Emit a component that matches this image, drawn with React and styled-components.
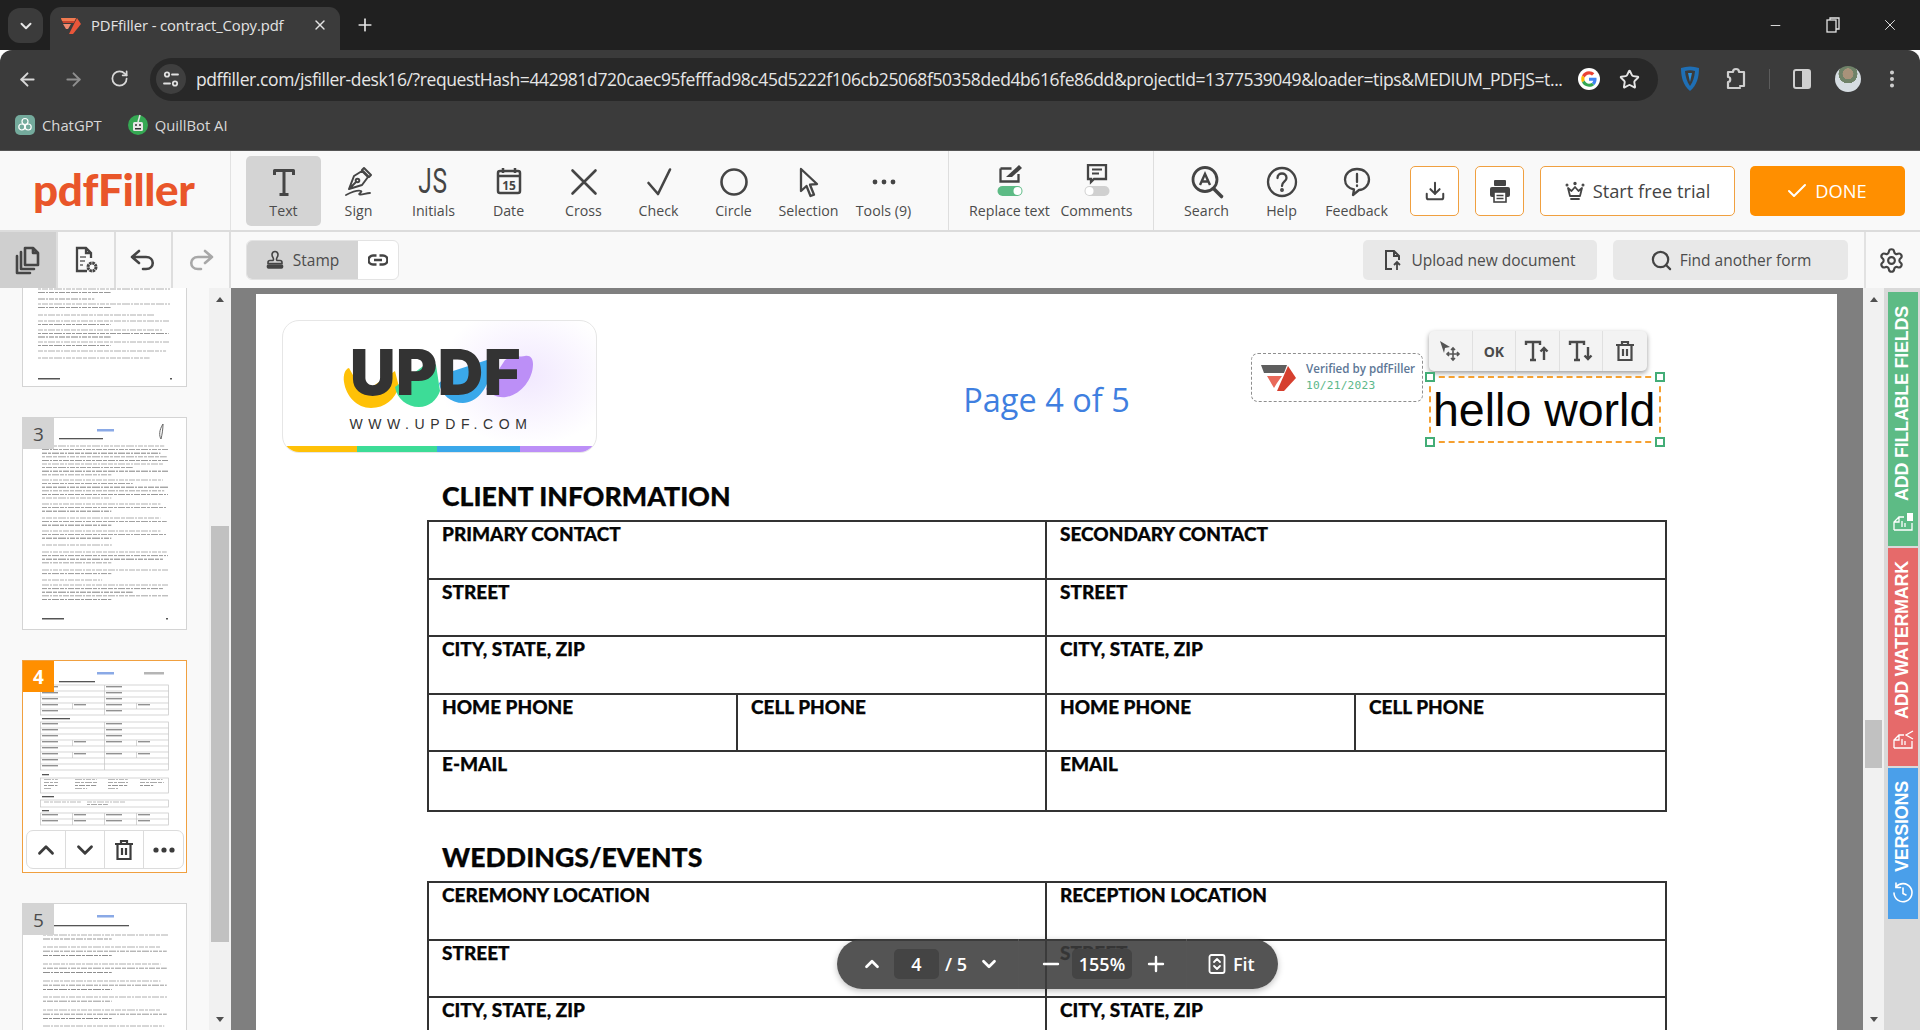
import React from 'react';
import styled, { createGlobalStyle } from 'styled-components';
import { ArrowLeft, ArrowRight, RotateCw, Star, Plus, X, ChevronDown, ChevronUp, Settings, Search, Minus, Check, Download, EllipsisVertical } from 'lucide-react';

const Global = createGlobalStyle`
  html, body { margin: 0; padding: 0; height: 100%; overflow: hidden; background: #fff; }
  #root { height: 100%; }
  * { box-sizing: border-box; }
`;

const Screen = styled.div`
  width: 1920px; height: 1030px; display: flex; flex-direction: column; overflow: hidden;
  font-family: "Open Sans", "Noto Sans", sans-serif; color: #4a4a4a;
`;

/* ---------- browser chrome ---------- */
const TabStrip = styled.div`
  height: 50px; background: #202020; display: flex; align-items: flex-end; padding-left: 8px; position: relative; flex: none;
`;
const TabMenu = styled.div`
  width: 35px; height: 35px; background: #3b3b3b; border-radius: 12px; margin-bottom: 7px; display: flex; align-items: center; justify-content: center; color: #e8e8e8;
`;
const Tab = styled.div`
  width: 290px; height: 43px; margin-left: 7px; background: #3b3b3b; border-radius: 11px 11px 0 0; display: flex; align-items: center; padding: 0 12px 7px 10px; color: #e3e3e3; font-size: 14.8px; gap: 9px;
`;
const TabTitle = styled.span` flex: 1; white-space: nowrap; letter-spacing: -0.1px; `;
const NewTab = styled.div` margin: 0 0 7px 10px; width: 30px; height: 36px; display: flex; align-items: center; justify-content: center; color: #e3e3e3; `;
const WinControls = styled.div` margin-left: auto; align-self: flex-start; height: 50px; display: flex; align-items: center; color: #e3e3e3; padding-right: 2px; `;
const WinBtn = styled.div` width: 57px; display: flex; align-items: center; justify-content: center; `;

const UrlBar = styled.div`
  height: 58px; background: #3b3b3b; flex: none; display: flex; align-items: center; color: #c8c8c8; border-radius: 12px 12px 0 0;
`;
const NavBtn = styled.div` width: 46px; display: flex; justify-content: center; color: ${p => p.$dim ? '#8f8f8f' : '#d8d8d8'}; `;
const NavGroup = styled.div` display: flex; padding-left: 4px; width: 150px; `;
const Omnibox = styled.div`
  width: 1508px; height: 43px; border-radius: 22px; background: #282828; display: flex; align-items: center; padding-left: 6px; color: #e6e6e6; flex: none;
`;
const SiteInfo = styled.div` width: 30px; height: 30px; border-radius: 50%; background: #3f3f3f; display: flex; align-items: center; justify-content: center; flex: none; `;
const UrlText = styled.div` margin-left: 10px; width: 1369px; font-size: 17.5px; white-space: nowrap; overflow: hidden; letter-spacing: -0.4px; flex: none; `;
const OmniIcon = styled.div` display: flex; justify-content: center; flex: none; width: ${p => p.$w}px; `;
const ExtIcons = styled.div` display: flex; align-items: center; flex: 1; color: #cfcfcf; `;
const ExtSlot = styled.div` width: ${p => p.$w}px; display: flex; justify-content: center; flex: none; `;
const ExtSep = styled.div` width: 1px; height: 20px; background: #5c5c5c; margin: 0 14px 0 19px; flex: none; `;
const Avatar = styled.div` width: 26px; height: 26px; border-radius: 50%; background: radial-gradient(circle at 50% 30%, #a8927a 0 24%, #6f8268 25% 42%, #d6dde2 43%); `;

const Bookmarks = styled.div`
  height: 43px; flex: none; background: #3b3b3b; display: flex; align-items: center; padding: 0 0 9px 15px; color: #d8d8d8; font-size: 14.8px; border-bottom: 1px solid #555;
`;
const Bookmark = styled.div` display: flex; align-items: center; gap: 7px; margin-right: 26px; `;

/* ---------- editor toolbar ---------- */
const MainBar = styled.div`
  height: 81px; flex: none; background: #f9f9f9; border-bottom: 2px solid #dcdcdc; display: flex; align-items: stretch;
`;
const LogoCell = styled.div` width: 231px; flex: none; border-right: 1px solid #e2e2e2; display: flex; align-items: center; padding: 0 0 3px 33px; `;
const Brand = styled.div` font-family: "Lato", sans-serif; font-weight: 900; font-size: 44px; color: #e9562a; letter-spacing: -0.4px; line-height: 1; `;
const ToolGroup = styled.div`
  display: flex; align-items: center; flex: none; padding: ${p => p.$pad}; border-right: ${p => p.$line ? '1px solid #dedede' : 'none'};
`;
const ToolItem = styled.div`
  width: ${p => p.$w || 75}px; height: 70px; border-radius: 5px; flex: none; display: flex; flex-direction: column; align-items: center; padding-top: 7px;
  background: ${p => p.$active ? '#d4d4d4' : 'transparent'};
`;
const ToolIcon = styled.div` height: 38px; display: flex; align-items: center; justify-content: center; color: #454545; `;
const ToolLabel = styled.div` font-size: 14.2px; line-height: 20px; color: #4c4c4c; white-space: nowrap; `;
const ActionRow = styled.div` display: flex; align-items: center; gap: 16px; margin-left: 16px; `;
const OutlineBtn = styled.div`
  height: 50px; width: ${p => p.$w}px; border: 1px solid #f0a040; border-radius: 5px; background: #fff; display: flex; align-items: center; justify-content: center; gap: 8px; color: #444; font-size: 18.3px; flex: none;
`;
const DoneBtn = styled.div`
  height: 50px; width: 155px; margin-left: -1px; background: #ff8f00; border-radius: 5px; padding-right: 3px; display: flex; align-items: center; justify-content: center; gap: 6px; color: #fff; font-size: 18.3px; flex: none;
`;

const SubBar = styled.div` height: 56px; flex: none; background: #f9f9f9; display: flex; align-items: center; border-bottom: 0; `;
const HistoryRow = styled.div` display: flex; width: 231px; height: 56px; flex: none; `;
const HistoryBtn = styled.div`
  width: 57.75px; height: 100%; display: flex; align-items: center; justify-content: center; border-right: 2px solid #dedede;
  background: ${p => p.$active ? '#cfcfcf' : '#f9f9f9'}; color: ${p => p.$dim ? '#a8a8a8' : '#454545'};
`;
const StampGroup = styled.div` display: flex; margin-left: 15px; height: 40px; width: 153px; border: 1px solid #e3e3e3; border-radius: 6px; overflow: hidden; background: #fff; `;
const StampMain = styled.div` width: 111px; background: #d4d4d4; display: flex; align-items: center; justify-content: center; gap: 9px; font-size: 15.5px; color: #4c4c4c; `;
const StampLink = styled.div` flex: 1; display: flex; align-items: center; justify-content: center; color: #444; `;
const SubSpacer = styled.div` flex: 1; `;
const GreyBtn = styled.div`
  width: ${p => p.$w}px; height: 40px; margin-right: 16px; background: #e8e8e8; border-radius: 5px; display: flex; align-items: center; justify-content: center; gap: ${p => p.$gap || 9}px; font-size: 15.5px; color: #4c4c4c; flex: none;
`;
const GearCell = styled.div` width: 56px; height: 100%; border-left: 2px solid #e2e2e2; display: flex; align-items: center; justify-content: center; color: #444; flex: none; padding-right: 4px; `;

/* ---------- workspace ---------- */
const Workspace = styled.div` flex: 1; min-height: 0; display: flex; position: relative; `;
const Sidebar = styled.div` width: 209px; flex: none; background: #f9f9f9; padding-left: 22px; display: flex; flex-direction: column; gap: 30px; overflow: hidden; `;
const Thumb = styled.div`
  width: 165px; height: ${p => p.$h || 213}px; flex: none; position: relative; background: #fff; overflow: hidden;
  border: 1px solid ${p => p.$active ? '#f0a040' : '#d4d4d4'}; ${p => p.$open ? 'border-bottom: 0;' : ''} ${p => p.$clip ? 'border-top: 0;' : ''}
  display: flex; align-items: ${p => p.$clip ? 'flex-end' : 'flex-start'};
`;
const ThumbNo = styled.div`
  position: absolute; left: 0; top: 0; width: 31px; height: 31px; display: flex; align-items: center; justify-content: center; font-size: 19px;
  background: ${p => p.$active ? '#ff8f00' : '#d4d4d4'}; color: ${p => p.$active ? '#fff' : '#4c4c4c'}; font-weight: ${p => p.$active ? 700 : 400};
`;
const ThumbControls = styled.div`
  position: absolute; left: 3px; bottom: 3px; width: 158px; height: 39px; background: #fff; border: 1px solid #dcdcdc; border-radius: 7px; display: grid; grid-template-columns: repeat(4, 1fr);
`;
const ThumbCtl = styled.div` display: flex; align-items: center; justify-content: center; color: #3c3c3c; border-right: ${p => p.$last ? '0' : '1px solid #dcdcdc'}; `;

const Scrollbar = styled.div`
  width: ${p => p.$w}px; flex: none; background: #f1f1f1; position: relative; display: flex; flex-direction: column; align-items: center; justify-content: space-between; padding: 9px 0 8px;
`;
const ScrollArrow = styled.div`
  width: 0; height: 0; border-left: 4.5px solid transparent; border-right: 4.5px solid transparent;
  ${p => p.$down ? 'border-top: 5px solid #505050;' : 'border-bottom: 5px solid #505050;'}
`;
const ScrollThumb = styled.div`
  position: absolute; left: 2px; right: 2px; top: ${p => p.$top}px; height: ${p => p.$h}px; background: #c1c1c1;
`;

const Viewer = styled.div` flex: 1; min-width: 0; background: #7f7f7f; padding: 6px 26px 0 25px; overflow: hidden; `;
const Sheet = styled.div` background: #fff; height: 780px; position: relative; overflow: hidden; `;
const SheetHead = styled.div` display: grid; grid-template-columns: 1fr auto 1fr; padding: 26px 0 0 26px; align-items: start; `;
const LogoCard = styled.div`
  width: 315px; height: 133px; border: 1px solid #e6e6e6; border-radius: 17px; position: relative; overflow: hidden; display: flex; flex-direction: column; align-items: center;
  background: radial-gradient(ellipse 90px 70px at 78% 42%, #f1e8fe 0, #fff 100%);
`;
const LogoUrl = styled.div` font-family: "Liberation Sans", sans-serif; font-size: 14px; line-height: 14px; letter-spacing: 5.6px; color: #333; margin-top: 6px; margin-left: 3px; white-space: nowrap; `;
const LogoStripe = styled.div` position: absolute; left: 0; right: 0; bottom: 0; height: 6px; display: grid; grid-template-columns: 73fr 79fr 82fr 75fr; `;
const StripePart = styled.div` background: ${p => p.$c}; `;
const PageLabel = styled.div` font-size: 32.5px; line-height: 44px; color: #3f7fe0; padding-right: 26px; margin-top: 58px; font-family: "Open Sans", sans-serif; white-space: nowrap; `;

const FormBody = styled.div` padding: 0 170px 0 171px; `;
const FormTitle = styled.div`
  font-family: "Lato", sans-serif; font-weight: 900; font-size: 26.7px; line-height: 30px; color: #050505; margin: ${p => p.$mt}px 0 9px 15px; white-space: nowrap; -webkit-text-stroke: .25px #050505;
`;
const FormGrid = styled.div`
  display: grid; grid-template-columns: repeat(4, 1fr); grid-auto-rows: 57.6px; border: 2px solid #333;
`;
const FormCell = styled.div`
  grid-column: span ${p => p.$span}; padding: 1px 0 0 13px; border-bottom: ${p => p.$lastRow ? '0' : '2px solid #333'}; border-right: ${p => p.$end ? '0' : '2px solid #333'};
  font-family: "Lato", sans-serif; font-weight: 900; font-size: 19px; line-height: 22px; color: #050505; white-space: nowrap; -webkit-text-stroke: .25px #050505;
`;

/* annotations on the PDF page */
const VerifiedStamp = styled.div`
  position: absolute; left: 995px; top: 59px; width: 172px; height: 49px; border: 1px dashed #8e8e8e; border-radius: 7px; display: flex; align-items: center; padding-left: 9px; gap: 9px; background: #fff;
`;
const VerifiedName = styled.div` font-size: 11.6px; line-height: 16px; font-weight: 600; color: #5d7796; white-space: nowrap; `;
const VerifiedDate = styled.div` font-family: "DejaVu Sans Mono", monospace; font-size: 11.2px; line-height: 17px; color: #5cb78a; letter-spacing: .2px; `;
const TextToolbar = styled.div`
  position: absolute; left: 1173px; top: 37px; width: 218px; height: 40px; background: #f3f3f3; border-radius: 5px; box-shadow: 0 2px 5px rgba(0,0,0,.4); display: grid; grid-template-columns: repeat(5, 1fr);
`;
const TextToolBtn = styled.div`
  display: flex; align-items: center; justify-content: center; color: #4a4a4a; border-right: ${p => p.$last ? '0' : '1px solid #e0e0e0'}; font-weight: 700; font-size: 14px;
`;
const TextBox = styled.div`
  position: absolute; left: 1173px; top: 82px; width: 232px; height: 67px; border: 2px dashed #f5a030; font-family: "Liberation Sans", sans-serif; font-size: 46.5px; line-height: 65px; color: #050505; padding-left: 2px; white-space: nowrap;
`;
const Handle = styled.div`
  position: absolute; width: 10px; height: 10px; background: #fff; border: 2px solid #43ad77;
  ${p => p.$top ? 'top: -6px;' : 'bottom: -6px;'} ${p => p.$left ? 'left: -6px;' : 'right: -6px;'}
`;

/* floating page navigator */
const Navigator = styled.div`
  position: absolute; left: 837px; top: 651px; width: 441px; height: 50px; border-radius: 25px; background: rgba(60,60,60,.88); box-shadow: 0 2px 6px rgba(0,0,0,.25);
  display: flex; align-items: center; color: #fff; font-size: 18px; font-weight: 600;
`;
const NavSection = styled.div`
  display: flex; align-items: center; height: 100%; width: ${p => p.$w}px; flex: none; padding-left: ${p => p.$pl}px; border-right: ${p => p.$line ? '1px solid #555' : '0'};
`;
const NavField = styled.div`
  width: ${p => p.$w}px; height: 30px; background: #444; border-radius: 5px; display: flex; align-items: center; justify-content: center; flex: none; margin: ${p => p.$m};
`;
const NavText = styled.span` margin-left: ${p => p.$ml}px; display: flex; align-items: center; `;

/* side rail */
const Rail = styled.div` width: 36px; flex: none; background: #d9d9d9; padding: 4px 2px 0 4px; display: flex; flex-direction: column; gap: 2px; `;
const RailTab = styled.div`
  height: ${p => p.$h}px; background: ${p => p.$c}; color: #fff; display: flex; flex-direction: column-reverse; align-items: center; justify-content: flex-start; padding-bottom: ${p => p.$pb}px; gap: 10px; flex: none;
`;
const RailText = styled.div`
  writing-mode: vertical-rl; transform: rotate(180deg); font-family: "Liberation Sans", sans-serif; font-weight: 700; font-size: 17.9px; line-height: 1; white-space: nowrap; letter-spacing: -0.2px;
`;

/* ---------- drawings ---------- */
const icon = { fill: 'none', stroke: 'currentColor', strokeLinecap: 'round', strokeLinejoin: 'round' };

const Favicon = () => (
  <svg width="22" height="20" viewBox="0 0 22 20"><path d="M1 3h15l-2 5H3z" fill="#c9452f"/><path d="M3 9h8l-3 5H6z" fill="#f08a70"/><path d="M17 3l4 6-8 10h-4z" fill="#e8563a"/><path d="M1 3h15l-1.5 3H2z" fill="#f07a50"/></svg>
);
const Tune = () => (
  <svg width="18" height="18" viewBox="0 0 18 18" {...icon} stroke="#e0e0e0" strokeWidth="1.8"><circle cx="5" cy="4.5" r="2.2"/><path d="M10 4.5h6M2 13.5h6"/><circle cx="13" cy="13.5" r="2.2"/></svg>
);
const GoogleG = () => (
  <svg width="22" height="22" viewBox="0 0 48 48"><circle cx="24" cy="24" r="24" fill="#fff"/><path fill="#EA4335" d="M24 14c2.8 0 5 1 6.700 2.600l5-5C32.600 8.700 28.700 7 24 7c-6.700 0-12.400 3.800-15.200 9.400l5.800 4.500C16 16.900 19.700 14 24 14z"/><path fill="#4285F4" d="M40.500 24.500c0-1.200-.1-2.300-.3-3.500H24v6.700h9.300c-.4 2.200-1.600 4-3.400 5.200l5.600 4.300c3.200-3 5-7.300 5-12.700z"/><path fill="#FBBC05" d="M14.600 27.200c-.4-1-.6-2.100-.6-3.200s.2-2.200.6-3.200l-5.800-4.400C7.600 18.700 7 21.300 7 24s.6 5.300 1.800 7.600z"/><path fill="#34A853" d="M24 41c4.600 0 8.500-1.500 11.500-4.100l-5.600-4.300c-1.600 1-3.500 1.700-5.900 1.700-4.300 0-8-2.900-9.400-6.900l-5.800 4.500C11.600 37.200 17.300 41 24 41z"/></svg>
);
const Shield = () => (
  <svg width="22" height="28" viewBox="0 0 22 28"><path d="M2 3c6-2 12-2 18 0 0 9-2 17-9 23C4 20 2 12 2 3z" fill="#1f6fb5"/><path d="M6 6c3-1 7-1 10 0-.5 6-2 11-5 15C8 17 6.500 12 6 6z" fill="#3b3b3b"/><path d="M9 8h4l-2 9z" fill="#2a8fdc"/></svg>
);
const PuzzleIcon = () => (
  <svg width="22" height="26" viewBox="0 0 22 26" {...icon} strokeWidth="2.2"><path d="M3 6h5c0-4 6-4 6 0h5v14h-4M3 6v5c3 0 3 5 0 5v6h12"/></svg>
);
const SidePanel = () => (
  <svg width="20" height="22" viewBox="0 0 20 22"><rect x="2" y="2" width="16" height="18" rx="2" fill="none" stroke="currentColor" strokeWidth="2"/><rect x="10" y="2" width="8" height="18" fill="currentColor"/></svg>
);
const Restore = () => (
  <svg width="14" height="16" viewBox="0 0 14 16" fill="none" stroke="currentColor" strokeWidth="1.3"><rect x="1" y="3" width="9" height="12"/><path d="M4 3V1h9v11h-3"/></svg>
);
const GptIcon = () => (
  <svg width="20" height="20" viewBox="0 0 20 20"><rect width="20" height="20" rx="5" fill="#74aa9c"/><g fill="none" stroke="#fff" strokeWidth="1.200"><circle cx="10" cy="6.500" r="3"/><circle cx="6.800" cy="12" r="3"/><circle cx="13.200" cy="12" r="3"/></g></svg>
);
const QuillIcon = () => (
  <svg width="20" height="22" viewBox="0 0 20 22"><circle cx="10" cy="11" r="10" fill="#35a853"/><rect x="5" y="8" width="10" height="9" rx="1.500" fill="#e6e6e6"/><circle cx="8" cy="11" r="1" fill="#333"/><circle cx="12" cy="11" r="1" fill="#333"/><path d="M10 8l2-7" stroke="#e6e6e6" strokeWidth="1.500"/><rect x="7" y="14" width="6" height="1.500" fill="#333"/></svg>
);

const TIcon = () => (<svg width="36" height="36" viewBox="0 0 36 36" {...icon} strokeWidth="3" strokeLinecap="butt"><path d="M8.500 11V6.500h19V11M18 6.500v24M13.500 30.500h9"/></svg>);
const SignIcon = () => (
  <svg width="36" height="36" viewBox="0 0 36 36" {...icon} strokeWidth="2"><path d="M21 6l2-2 7 7-2 2zM21 7l-8 5-5 13 13-4 6-8zM8 25l7-7"/><circle cx="16.500" cy="16.500" r="1.800"/><path d="M5 31c6-3 12-5 15-4 2 1-4 3-1 3.500 3 .3 6-1.500 10-1.500" strokeWidth="1.800"/></svg>
);
const JsGlyph = styled.div` font-family: "Roboto", sans-serif; font-weight: 400; font-size: 35px; line-height: 36px; letter-spacing: 1px; transform: scaleX(.7); color: #454545; `;
const CalIcon = () => (
  <svg width="36" height="36" viewBox="0 0 36 36"><rect x="7" y="7" width="22" height="22" rx="2" fill="none" stroke="currentColor" strokeWidth="2.500"/><path d="M7 12h22" stroke="currentColor" strokeWidth="2.500"/><path d="M12 4v5M24 4v5" stroke="currentColor" strokeWidth="2.500"/><text x="18" y="26" textAnchor="middle" fontSize="12" fontWeight="700" fontFamily="Open Sans, sans-serif" fill="currentColor">15</text></svg>
);
const CrossIcon = () => (<svg width="36" height="36" viewBox="0 0 36 36" {...icon} strokeWidth="2.600"><path d="M6.500 6.500l23 23M29.500 6.500l-23 23"/></svg>);
const CheckIcon = () => (<svg width="36" height="36" viewBox="0 0 36 36" {...icon} strokeWidth="2.600"><path d="M7.500 19l9.500 11L29 5.500"/></svg>);
const CircleIcon = () => (<svg width="36" height="36" viewBox="0 0 36 36" {...icon} strokeWidth="2.600"><circle cx="18" cy="18" r="12.500"/></svg>);
const SelectIcon = () => (<svg width="36" height="36" viewBox="0 0 36 36" {...icon} strokeWidth="2.300"><path d="M10 5l16 15-7 .7 4 10-3.500 1.300-4-10-5.500 5z"/></svg>);
const DotsIcon = () => (<svg width="36" height="36" viewBox="0 0 36 36" fill="currentColor"><circle cx="9" cy="18" r="2.400"/><circle cx="18" cy="18" r="2.400"/><circle cx="27" cy="18" r="2.400"/></svg>);
const ReplaceIcon = () => (
  <svg width="28" height="36" viewBox="0 0 28 36"><path d="M4.500 4.500h11M4.500 4.500v13h18V10" fill="none" stroke="#444" strokeWidth="2.300"/><path d="M23 1l3 3-10 9H10z" fill="#444"/><rect x="1.500" y="22" width="25" height="10" rx="5" fill="#5dbb85"/><circle cx="21.500" cy="27" r="4" fill="#fff"/></svg>
);
const CommentIcon = () => (
  <svg width="28" height="36" viewBox="0 0 28 36"><path d="M5 1h18v14H11l-3 3v-3H5z" fill="none" stroke="#444" strokeWidth="2.300"/><path d="M9 5.500h10M9 9.500h7" stroke="#444" strokeWidth="2"/><rect x="1.500" y="22" width="25" height="10" rx="5" fill="#d0d0d0"/><circle cx="6.500" cy="27" r="4" fill="#fff"/></svg>
);
const SearchA = () => (
  <svg width="36" height="36" viewBox="0 0 36 36"><circle cx="16" cy="15.500" r="12" fill="none" stroke="#444" strokeWidth="2.800"/><path d="M24.500 24.500l8 8" stroke="#444" strokeWidth="3.600" strokeLinecap="round"/><path d="M11 21l5-11 5 11M12.800 17.500h6.400" fill="none" stroke="#444" strokeWidth="2.400"/></svg>
);
const HelpIcon = () => (
  <svg width="36" height="36" viewBox="0 0 36 36" {...icon} stroke="#444" strokeWidth="2.300"><circle cx="18" cy="18" r="14"/><path d="M13.500 14c0-6 9-6 9 0 0 3.500-4.500 3.500-4.500 8"/><circle cx="18" cy="26" r=".8"/></svg>
);
const FeedbackIcon = () => (
  <svg width="36" height="36" viewBox="0 0 36 36" {...icon} stroke="#444" strokeWidth="2.300"><path d="M18 5c7 0 12 4.500 12 10.500S25 26 20 26l-6 5 1-5.500C10 24.500 6 21 6 15.500S11 5 18 5z"/><path d="M18 10v8M18 21.500v.5"/></svg>
);
const CrownIcon = () => (
  <svg width="20" height="20" viewBox="0 0 20 20" {...icon} stroke="#444" strokeWidth="1.800"><path d="M3 7l3.500 3L10 6l3.500 4L17 7l-2 8H5z"/><path d="M6 18h8"/><circle cx="10" cy="2.500" r=".8"/><circle cx="2" cy="4" r=".6"/><circle cx="18" cy="4" r=".6"/></svg>
);
const PrintIcon = () => (
  <svg width="22" height="24" viewBox="0 0 22 24"><rect x="5" y="1" width="12" height="6" rx="1" fill="#444"/><rect x="1" y="8" width="20" height="10" rx="2" fill="#444"/><rect x="5" y="13" width="12" height="10" fill="#fff" stroke="#444" strokeWidth="1.600"/><path d="M7.500 16.500h7M7.500 19.500h7" stroke="#444" strokeWidth="1.300"/></svg>
);
const PagesIcon = () => (
  <svg width="26" height="30" viewBox="0 0 26 30" {...icon} strokeWidth="2.600"><path d="M10 3h8l5 5v12H10zM18 3v5h5" /><path d="M6 7v17h13M2 11v17h13" /></svg>
);
const DocGear = () => (
  <svg width="26" height="30" viewBox="0 0 26 30"><path d="M14 26H4V3h9l5 5v5M13 3v5h5" fill="none" stroke="#444" strokeWidth="2.300"/><path d="M7 12h6M7 16h5M7 20h3" stroke="#666" strokeWidth="1.500"/><circle cx="19" cy="22" r="4" fill="none" stroke="#444" strokeWidth="3" strokeDasharray="2.500 .6"/></svg>
);
const Undo = () => (<svg width="28" height="24" viewBox="0 0 28 24" {...icon} strokeWidth="2.600"><path d="M10 3L3 9l7 6M3 9h14c9 0 9 12 0 12h-3"/></svg>);
const Redo = () => (<svg width="28" height="24" viewBox="0 0 28 24" {...icon} strokeWidth="2.600"><path d="M18 3l7 6-7 6M25 9H11c-9 0-9 12 0 12h3"/></svg>);
const StampIcon = () => (
  <svg width="18" height="20" viewBox="0 0 18 20" fill="none" stroke="#444" strokeWidth="1.600"><path d="M9 1.500c-3.500 0-3.500 4-2 6 .5 1 .5 2.500 0 3H4c-1 0-2 1-2 2v1h14v-1c0-1-1-2-2-2h-3c-.5-.5-.5-2 0-3 1.500-2 1.500-6-2-6z"/><rect x="1.500" y="15" width="15" height="3" rx="1" fill="#444"/></svg>
);
const LinkIcon = () => (
  <svg width="20" height="14" viewBox="0 0 20 14" fill="none" stroke="#444" strokeWidth="2.600"><path d="M8.500 2.500H5a4.500 4.500 0 0 0 0 9h3.500M11.500 2.500H15a4.500 4.500 0 0 1 0 9h-3.500M6 7h8"/></svg>
);
const UploadDoc = () => (
  <svg width="18" height="22" viewBox="0 0 18 22" fill="none" stroke="#444" strokeWidth="2"><path d="M8 20H2V2h8l5 5v4M10 2v5h5"/><path d="M13 21v-8M10 16l3-3 3 3" strokeWidth="1.800"/></svg>
);
const Logomark = () => (
  <svg width="36" height="28" viewBox="0 0 36 28"><path d="M0 1h26l-3 8H3z" fill="#5e5e5e"/><path d="M6 12h15l-5 7-3 5z" fill="#e9695a"/><path d="M27 2l8 12-12 13h-7z" fill="#d63f2e"/></svg>
);
const MoveIcon = () => (
  <svg width="24" height="24" viewBox="0 0 24 24"><path d="M2 2l10 6-5 1-1 5z" fill="#555"/><path d="M15 9v12M9 15h12M13 11l2-2 2 2M13 19l2 2 2-2M11 13l-2 2 2 2M19 13l2 2-2 2" fill="none" stroke="#555" strokeWidth="1.600"/></svg>
);
const TextSize = ({ up }) => (
  <svg width="26" height="24" viewBox="0 0 26 24" fill="none" stroke="#4a4a4a" strokeWidth="2.400"><path d="M2 6V3h14v3M9 3v18M6 21h6"/>{up ? <path d="M20 21V9M16.500 12.500L20 9l3.500 3.500"/> : <path d="M20 8v12M16.500 16.500L20 20l3.500-3.500"/>}</svg>
);
const TrashIcon = ({ s = 22 }) => (
  <svg width={s} height={s} viewBox="0 0 22 22" fill="none" stroke="currentColor" strokeWidth="2.200"><path d="M2 5h18M8 5V2h6v3M4.500 5v15h13V5M9 9v7M13 9v7"/></svg>
);
const FitIcon = () => (
  <svg width="18" height="20" viewBox="0 0 18 20" fill="none" stroke="#fff" strokeWidth="1.800" strokeLinecap="round" strokeLinejoin="round"><rect x="1.500" y="1" width="15" height="18" rx="2"/><path d="M6 8l3-3 3 3M6 12l3 3 3-3"/></svg>
);
const RailDoc = ({ mark }) => (
  <svg width="22" height="22" viewBox="0 0 22 22" fill="none" stroke="#fff" strokeWidth="1.300" style={{ transform: 'rotate(-90deg)' }}><path d="M3 2h8l5 5v5M11 2v5h5M3 2v18h7M6 10h6M6 13h4"/>{mark === 'b' ? <rect x="12" y="15" width="8" height="6" fill="#fff" stroke="none"/> : <path d="M12 21l4-7 4 7" />}</svg>
);
const RailClock = () => (
  <svg width="22" height="22" viewBox="0 0 22 22" fill="none" stroke="#fff" strokeWidth="1.600" strokeLinecap="round"><path d="M4 5a9 9 0 1 1-2 6"/><path d="M4 1v4.500h4.500M11 6v5.500l3 1.500"/></svg>
);

/* miniature of a page: lines broken into word-sized dashes */
const lineWidths = [1, .97, 1, .94, .99, 1, .96, .72];
const dashSets = ['5 1 3 1 7 1 4 1 2 1 6 1', '3 1 6 1 4 1 8 1 2 1 5 1', '7 1 2 1 5 1 3 1 6 1 4 1'];
const Lines = ({ x, y, w, n, gap = 3.500, dark = '#4a4a4a' }) => (
  <g>
    {Array.from({ length: n }, (_, i) => (
      <line key={i} x1={x} x2={x + (n > 1 && i === n - 1 ? w * .55 : w * lineWidths[(i + n) % 8])} y1={y + i * gap} y2={y + i * gap} stroke={dark} strokeWidth=".8" strokeDasharray={dashSets[(i + Math.round(y)) % 3]} opacity={.55 + ((i * 7) % 5) * .08} />
    ))}
  </g>
);
const ThumbSvg = ({ children, h = 212 }) => (<svg width="163" height={h} viewBox={`0 0 163 ${h}`} style={{ display: 'block', flex: 'none' }}>{children}</svg>);
const MiniHead = () => (<rect x="74" y="11" width="17" height="2.500" fill="#8aa9e6" />);

const ThumbTwo = () => (
  <ThumbSvg h={98}>
    <Lines x={15} y={1} w={132} n={2} gap={3.500} />
    <Lines x={15} y={11} w={58} n={1} dark="#111" />
    <Lines x={15} y={16} w={132} n={2} />
    <Lines x={15} y={27} w={120} n={1} />
    <Lines x={15} y={33} w={132} n={2} />
    <Lines x={15} y={42} w={132} n={3} />
    <Lines x={15} y={54} w={132} n={2} />
    <Lines x={15} y={63} w={132} n={1} />
    <Lines x={15} y={70} w={115} n={1} />
    <rect x={15} y={90} width={22} height={1.500} fill="#555" /><rect x={147} y={90} width={2} height={1.500} fill="#555" />
  </ThumbSvg>
);
const ThumbThree = () => (
  <ThumbSvg>
    <MiniHead />
    <path d="M140 6c-4 6-4 12-2 15 1-4 2-10 2-15z" fill="none" stroke="#666" />
    <rect x="36" y="20" width="44" height="1.300" fill="#555" />
    <Lines x={19} y={28} w={126} n={9} gap={3.600} />
    <Lines x={19} y={62} w={126} n={6} gap={3.600} />
    <Lines x={19} y={86} w={126} n={3} gap={3.600} />
    <Lines x={19} y={100} w={126} n={3} gap={3.600} />
    <Lines x={19} y={113} w={126} n={3} gap={3.600} />
    <Lines x={19} y={127} w={72} n={1} />
    <Lines x={19} y={134} w={126} n={4} gap={3.600} />
    <Lines x={19} y={152} w={126} n={2} gap={3.600} />
    <Lines x={19} y={162} w={62} n={1} />
    <Lines x={19} y={167} w={126} n={5} gap={3.600} />
    <rect x={19} y={200} width={22} height={1.500} fill="#555" /><rect x={143} y={200} width={2} height={1.500} fill="#555" />
  </ThumbSvg>
);
const MiniTable = ({ y, rows, h = 6 }) => (
  <g>
    <rect x="17.500" y={y} width="128" height={rows.length * h} fill="none" stroke="#c4c4c4" strokeWidth=".7" />
    <path d={`M81.500 ${y}v${rows.length * h}`} stroke="#c4c4c4" strokeWidth=".7" />
    {rows.map((r, i) => (
      <g key={i}>
        {i > 0 && <path d={`M17.500 ${y + i * h}h128`} stroke="#c4c4c4" strokeWidth=".7" />}
        {r.map(c => (<rect key={c} x={19 + c * 32} y={y + i * h + 1.200} width={c % 2 ? 12 : 16} height="1.100" fill="#555" opacity=".8" />))}
        {r.length > 2 && <path d={`M49.500 ${y + i * h}v${h}M113.500 ${y + i * h}v${h}`} stroke="#c4c4c4" strokeWidth=".7" />}
      </g>
    ))}
  </g>
);
const ThumbFour = () => (
  <ThumbSvg>
    <MiniHead />
    <rect x="121" y="11" width="20" height="2.500" fill="#b5b5b5" />
    <rect x="36" y="20" width="36" height="1.300" fill="#555" />
    <MiniTable y={24} rows={[[0, 2], [0, 2], [0, 2], [0, 1, 2, 3], [0, 2]]} />
    <rect x="19" y="57" width="28" height="1.300" fill="#555" />
    <MiniTable y={61} rows={[[0, 2], [0, 2], [0, 2], [0, 1, 2, 3], [0], [0, 1, 2, 3], [0], [0]]} />
    <rect x="19" y="113" width="7" height="1.300" fill="#555" />
    <rect x="17.500" y="117" width="128" height="15" fill="none" stroke="#c4c4c4" strokeWidth=".7" />
    <Lines x={21} y={118.500} w={14} n={4} gap={3} dark="#666" />
    <Lines x={52} y={118.500} w={22} n={4} gap={3} dark="#666" />
    <Lines x={85} y={118.500} w={20} n={4} gap={3} dark="#666" />
    <Lines x={117} y={118.500} w={24} n={3} gap={3} dark="#666" />
    <rect x="19" y="135" width="12" height="1.300" fill="#555" />
    <rect x="17.500" y="139" width="128" height="7" fill="none" stroke="#c4c4c4" strokeWidth=".7" />
    <Lines x={21} y={141} w={38} n={1} dark="#666" />
    <Lines x={64} y={141} w={38} n={2} gap={2.500} dark="#666" />
    <rect x="19" y="149" width="7" height="1.300" fill="#555" />
    <MiniTable y={152} rows={[[0, 1, 2, 3], [0, 1, 2, 3]]} />
  </ThumbSvg>
);
const ThumbFive = () => (
  <ThumbSvg h={130}>
    <MiniHead />
    <rect x="30" y="21" width="76" height="1.300" fill="#555" />
    <Lines x={20} y={31} w={125} n={2} gap={4} />
    <Lines x={20} y={43} w={125} n={3} gap={4.200} />
    <Lines x={20} y={60} w={125} n={3} gap={4.200} />
    <Lines x={20} y={77} w={125} n={3} gap={4.200} />
    <Lines x={20} y={93} w={125} n={2} gap={4.200} />
    <Lines x={20} y={106} w={125} n={3} gap={4.200} />
    <Lines x={20} y={122} w={125} n={1} />
  </ThumbSvg>
);

const UpdfArt = () => (
  <svg width="313" height="90" viewBox="0 0 313 90" style={{ display: 'block', flex: 'none' }}>
    <path d="M66 47c-4 1-6 7-5 14 2 14 13 26 27 26 14 0 24-9 28-21L112 50 80 72z" fill="#ffc107" />
    <path d="M112 66c2 12 12 20 24 20 10 0 18-7 21-16l-4-26c-3-3-7-3-10-1z" fill="#3ddc97" />
    <path d="M156 62c2 12 12 20 24 20 13 0 25-14 27-30 1-6 0-10-3-13L170 50z" fill="#3aa8ea" />
    <path d="M203 68c5 6 12 9 20 8 14-2 27-17 27-33 0-6-3-9-8-8-5 1-14 0-20 4z" fill="#bc8ff7" />
    <text x="67" y="74" fontFamily="Inter, sans-serif" fontWeight="900" fontSize="63" letterSpacing=".5" fill="#333">UPDF</text>
  </svg>
);
const LogoBlock = () => (
  <LogoCard>
    <UpdfArt />
    <LogoUrl>WWW.UPDF.COM</LogoUrl>
    <LogoStripe>
      {['#ffc107', '#3ddc97', '#3aa8ea', '#bc8ff7'].map(c => <StripePart key={c} $c={c} />)}
    </LogoStripe>
  </LogoCard>
);

const clientRows = [
  [['PRIMARY CONTACT', 2], ['SECONDARY CONTACT', 2]],
  [['STREET', 2], ['STREET', 2]],
  [['CITY, STATE, ZIP', 2], ['CITY, STATE, ZIP', 2]],
  [['HOME PHONE', 1], ['CELL PHONE', 1], ['HOME PHONE', 1], ['CELL PHONE', 1]],
  [['E-MAIL', 2], ['EMAIL', 2]],
];
const weddingRows = [
  [['CEREMONY LOCATION', 2], ['RECEPTION LOCATION', 2]],
  [['STREET', 2], ['STREET', 2]],
  [['CITY, STATE, ZIP', 2], ['CITY, STATE, ZIP', 2]],
];
const Table = ({ rows, open }) => (
  <FormGrid>
    {rows.flatMap((row, r) => {
      let used = 0;
      return row.map(([t, span], c) => {
        used += span;
        return <FormCell key={`${r}-${c}`} $span={span} $end={used === 4} $lastRow={!open && r === rows.length - 1}>{t}</FormCell>;
      });
    })}
  </FormGrid>
);

const tools = [
  ['Text', <TIcon />, true], ['Sign', <SignIcon />], ['Initials', <JsGlyph>JS</JsGlyph>], ['Date', <CalIcon />], ['Cross', <CrossIcon />],
  ['Check', <CheckIcon />], ['Circle', <CircleIcon />], ['Selection', <SelectIcon />], ['Tools (9)', <DotsIcon />],
];

function DotsIconSmall() {
  return (<svg width="24" height="8" viewBox="0 0 24 8" fill="#3c3c3c"><circle cx="4" cy="4" r="2.600" /><circle cx="12" cy="4" r="2.600" /><circle cx="20" cy="4" r="2.600" /></svg>);
}

export default function App() {
  return (
    <Screen>
      <Global />
      <TabStrip>
        <TabMenu><ChevronDown size={18} strokeWidth={2.6} /></TabMenu>
        <Tab>
          <Favicon />
          <TabTitle>PDFfiller - contract_Copy.pdf</TabTitle>
          <X size={16} strokeWidth={2} />
        </Tab>
        <NewTab><Plus size={20} strokeWidth={2} /></NewTab>
        <WinControls>
          <WinBtn><Minus size={15} strokeWidth={1.5} /></WinBtn>
          <WinBtn><Restore /></WinBtn>
          <WinBtn><X size={18} strokeWidth={1.3} /></WinBtn>
        </WinControls>
      </TabStrip>
      <UrlBar>
        <NavGroup>
          <NavBtn><ArrowLeft size={21} strokeWidth={2.2} /></NavBtn>
          <NavBtn $dim><ArrowRight size={21} strokeWidth={2.2} /></NavBtn>
          <NavBtn><RotateCw size={19} strokeWidth={2.2} /></NavBtn>
        </NavGroup>
        <Omnibox>
          <SiteInfo><Tune /></SiteInfo>
          <UrlText>pdffiller.com/jsfiller-desk16/?requestHash=442981d720caec95fefffad98c45d5222f106cb25068f50358ded4b616fe86dd&amp;projectId=1377539049&amp;loader=tips&amp;MEDIUM_PDFJS=t...</UrlText>
          <OmniIcon $w={47}><GoogleG /></OmniIcon>
          <OmniIcon $w={34}><Star size={21} strokeWidth={2.2} /></OmniIcon>
        </Omnibox>
        <ExtIcons>
          <ExtSlot $w={64}><Shield /></ExtSlot>
          <ExtSlot $w={28}><PuzzleIcon /></ExtSlot>
          <ExtSep />
          <ExtSlot $w={36}><SidePanel /></ExtSlot>
          <ExtSlot $w={56}><Avatar /></ExtSlot>
          <ExtSlot $w={32}><EllipsisVertical size={22} strokeWidth={2.4} /></ExtSlot>
        </ExtIcons>
      </UrlBar>
      <Bookmarks>
        <Bookmark><GptIcon />ChatGPT</Bookmark>
        <Bookmark><QuillIcon />QuillBot AI</Bookmark>
      </Bookmarks>

      <MainBar>
        <LogoCell><Brand>pdfFiller</Brand></LogoCell>
        <ToolGroup $pad="0 27px 0 15px" $line>
          {tools.map(([label, ic, active]) => (
            <ToolItem key={label} $active={active}><ToolIcon>{ic}</ToolIcon><ToolLabel>{label}</ToolLabel></ToolItem>
          ))}
        </ToolGroup>
        <ToolGroup $pad="0 13px 0 17px" $line>
          <ToolItem $w={87}><ToolIcon><ReplaceIcon /></ToolIcon><ToolLabel>Replace text</ToolLabel></ToolItem>
          <ToolItem $w={87}><ToolIcon><CommentIcon /></ToolIcon><ToolLabel>Comments</ToolLabel></ToolItem>
        </ToolGroup>
        <ToolGroup $pad="0 0 0 15px">
          <ToolItem><ToolIcon><SearchA /></ToolIcon><ToolLabel>Search</ToolLabel></ToolItem>
          <ToolItem><ToolIcon><HelpIcon /></ToolIcon><ToolLabel>Help</ToolLabel></ToolItem>
          <ToolItem><ToolIcon><FeedbackIcon /></ToolIcon><ToolLabel>Feedback</ToolLabel></ToolItem>
        </ToolGroup>
        <ActionRow>
          <OutlineBtn $w={49}><Download size={22} strokeWidth={2.2} /></OutlineBtn>
          <OutlineBtn $w={49}><PrintIcon /></OutlineBtn>
          <OutlineBtn $w={195}><CrownIcon />Start free trial</OutlineBtn>
          <DoneBtn><Check size={24} strokeWidth={2} />DONE</DoneBtn>
        </ActionRow>
      </MainBar>

      <SubBar>
        <HistoryRow>
          <HistoryBtn $active><PagesIcon /></HistoryBtn>
          <HistoryBtn><DocGear /></HistoryBtn>
          <HistoryBtn><Undo /></HistoryBtn>
          <HistoryBtn $dim><Redo /></HistoryBtn>
        </HistoryRow>
        <StampGroup>
          <StampMain><StampIcon />Stamp</StampMain>
          <StampLink><LinkIcon /></StampLink>
        </StampGroup>
        <SubSpacer />
        <GreyBtn $w={234}><UploadDoc />Upload new document</GreyBtn>
        <GreyBtn $w={235} $gap={7}><Search size={23} strokeWidth={2.3} color="#444" />Find another form</GreyBtn>
        <GearCell><Settings size={27} strokeWidth={1.9} /></GearCell>
      </SubBar>

      <Workspace>
        <Sidebar>
          <Thumb $h={99} $clip><ThumbTwo /></Thumb>
          <Thumb><ThumbThree /><ThumbNo>3</ThumbNo></Thumb>
          <Thumb $active>
            <ThumbFour />
            <ThumbNo $active>4</ThumbNo>
            <ThumbControls>
              <ThumbCtl><ChevronUp size={26} strokeWidth={2.6} /></ThumbCtl>
              <ThumbCtl><ChevronDown size={26} strokeWidth={2.6} /></ThumbCtl>
              <ThumbCtl><TrashIcon /></ThumbCtl>
              <ThumbCtl $last><DotsIconSmall /></ThumbCtl>
            </ThumbControls>
          </Thumb>
          <Thumb $h={130} $open><ThumbFive /><ThumbNo>5</ThumbNo></Thumb>
        </Sidebar>
        <Scrollbar $w={22}>
          <ScrollArrow />
          <ScrollThumb $top={238} $h={416} />
          <ScrollArrow $down />
        </Scrollbar>
        <Viewer>
          <Sheet>
            <SheetHead>
              <LogoBlock />
              <PageLabel>Page 4 of 5</PageLabel>
              <div />
            </SheetHead>
            <FormBody>
              <FormTitle $mt={28}>CLIENT INFORMATION</FormTitle>
              <Table rows={clientRows} />
              <FormTitle $mt={30}>WEDDINGS/EVENTS</FormTitle>
              <Table rows={weddingRows} open />
            </FormBody>
            <VerifiedStamp>
              <Logomark />
              <div>
                <VerifiedName>Verified by pdfFiller</VerifiedName>
                <VerifiedDate>10/21/2023</VerifiedDate>
              </div>
            </VerifiedStamp>
            <TextToolbar>
              <TextToolBtn><MoveIcon /></TextToolBtn>
              <TextToolBtn>OK</TextToolBtn>
              <TextToolBtn><TextSize up /></TextToolBtn>
              <TextToolBtn><TextSize /></TextToolBtn>
              <TextToolBtn $last><TrashIcon /></TextToolBtn>
            </TextToolbar>
            <TextBox>
              hello world
              <Handle $top $left /><Handle $top /><Handle $left /><Handle />
            </TextBox>
          </Sheet>
        </Viewer>
        <Scrollbar $w={21}>
          <ScrollArrow />
          <ScrollThumb $top={432} $h={48} />
          <ScrollArrow $down />
        </Scrollbar>
        <Rail>
          <RailTab $h={254} $c="#5dbb85" $pb={13}><RailDoc mark="b" /><RailText>ADD FILLABLE FIELDS</RailText></RailTab>
          <RailTab $h={218} $c="#e66a6a" $pb={15}><RailDoc /><RailText>ADD WATERMARK</RailText></RailTab>
          <RailTab $h={151} $c="#4a9fea" $pb={15}><RailClock /><RailText>VERSIONS</RailText></RailTab>
        </Rail>
        <Navigator>
          <NavSection $w={182} $pl={24} $line>
            <ChevronUp size={22} strokeWidth={3} />
            <NavField $w={45} $m="0 0 0 11px">4</NavField>
            <NavText $ml={6}>/ 5</NavText>
            <NavText $ml={11}><ChevronDown size={22} strokeWidth={3} /></NavText>
          </NavSection>
          <NavSection $w={168} $pl={20} $line>
            <Minus size={24} strokeWidth={2.4} />
            <NavField $w={60} $m="0 0 0 9px">155%</NavField>
            <NavText $ml={12}><Plus size={24} strokeWidth={2.4} /></NavText>
          </NavSection>
          <NavSection $w={90} $pl={21}>
            <FitIcon />
            <NavText $ml={7}>Fit</NavText>
          </NavSection>
        </Navigator>
      </Workspace>
    </Screen>
  );
}
